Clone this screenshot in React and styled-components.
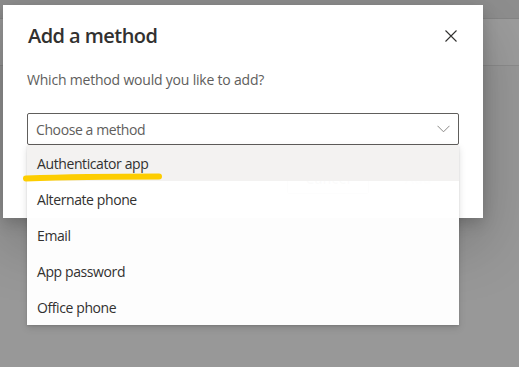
import React from 'react';
import styled, { createGlobalStyle } from 'styled-components';

const GlobalStyle = createGlobalStyle`
  body {
    margin: 0;
    background: #999999;
    font-family: "Segoe UI", "Open Sans", "Noto Sans", sans-serif;
  }
`;

const Page = styled.div`
  position: relative;
  width: 519px;
  height: 367px;
  overflow: hidden;
  padding: 5px 0 0 3px;
  box-sizing: border-box;
  background: linear-gradient(
    to bottom,
    #8e8e8e 0 18px,
    #858585 18px 19px,
    #9c9c9c 19px 65px,
    #8c8c8c 65px 66px,
    #989898 66px
  );
`;

const Dialog = styled.div`
  position: relative;
  width: 480px;
  height: 213px;
  box-sizing: border-box;
  padding: 0 24px 24px;
  background: #ffffff;
  display: flex;
  flex-direction: column;
  box-shadow: 0 25.6px 57.6px rgba(0, 0, 0, 0.22),
    0 4.8px 14.4px rgba(0, 0, 0, 0.18);
`;

const Header = styled.div`
  display: flex;
  align-items: center;
  justify-content: space-between;
  padding-top: 17px;
`;

const Title = styled.h2`
  margin: 0 0 0 1px;
  font-size: 20px;
  line-height: 28px;
  font-weight: 600;
  letter-spacing: -0.55px;
  color: #323130;
`;

const CloseButton = styled.button`
  width: 12px;
  height: 28px;
  margin-right: 2px;
  padding: 0;
  border: none;
  background: none;
  display: flex;
  align-items: center;
  justify-content: center;
`;

const Subtitle = styled.p`
  margin: 20px 0 0 0;
  font-size: 14px;
  line-height: 20px;
  letter-spacing: -0.2px;
  color: #605e5c;
`;

const Field = styled.div`
  position: relative;
  margin-top: 23px;
  z-index: 2;
`;

const Select = styled.div`
  height: 32px;
  box-sizing: border-box;
  border: 1px solid #605e5c;
  border-radius: 2px;
  padding: 0 8px;
  display: flex;
  align-items: center;
  justify-content: space-between;
  font-size: 14px;
  letter-spacing: -0.4px;
  color: #605e5c;
`;

const Menu = styled.ul`
  position: absolute;
  top: 100%;
  left: 0;
  width: 100%;
  margin: 0;
  padding: 0;
  list-style: none;
  background: rgba(255, 255, 255, 0.985);
  box-shadow: 0 3.2px 7.2px rgba(0, 0, 0, 0.132),
    0 0.6px 1.8px rgba(0, 0, 0, 0.108);
`;

const Option = styled.li`
  height: 36px;
  padding: 0 10px;
  display: flex;
  align-items: center;
  font-size: 14px;
  letter-spacing: -0.4px;
  color: #323130;
  background: ${p => (p.active ? 'rgba(243, 242, 241, 0.985)' : 'transparent')};
`;

const Footer = styled.div`
  margin-top: auto;
  display: flex;
  justify-content: flex-end;
  gap: 8px;
`;

const Button = styled.button`
  width: 82px;
  height: 32px;
  box-sizing: border-box;
  border-radius: 2px;
  font-family: inherit;
  font-size: 14px;
  font-weight: 600;
  border: 1px solid ${p => (p.disabled ? '#f3f2f1' : '#8a8886')};
  background: ${p => (p.disabled ? '#f3f2f1' : '#ffffff')};
  color: ${p => (p.disabled ? '#a19f9d' : '#323130')};
`;

const Marker = styled.svg`
  position: absolute;
  left: 18px;
  top: 169px;
  z-index: 5;
`;

const methods = [
  'Authenticator app',
  'Alternate phone',
  'Email',
  'App password',
  'Office phone',
];

export default function App() {
  return (
    <Page>
      <GlobalStyle />
      <Dialog>
        <Header>
          <Title>Add a method</Title>
          <CloseButton aria-label="Close">
            <svg width="12" height="12" viewBox="0 0 12 12">
              <path
                d="M0.5 0.5 L11.5 11.5 M11.5 0.5 L0.5 11.5"
                stroke="#323130"
                strokeWidth="1.1"
                fill="none"
              />
            </svg>
          </CloseButton>
        </Header>
        <Subtitle>Which method would you like to add?</Subtitle>
        <Field>
          <Select>
            <span>Choose a method</span>
            <svg width="13" height="8" viewBox="0 0 13 8">
              <path
                d="M0.5 0.8 L6.5 6.8 L12.5 0.8"
                stroke="#8a8886"
                strokeWidth="1"
                fill="none"
              />
            </svg>
          </Select>
          <Menu>
            {methods.map((m, i) => (
              <Option key={m} active={i === 0}>
                {m}
              </Option>
            ))}
          </Menu>
        </Field>
        <Footer>
          <Button>Cancel</Button>
          <Button disabled>Add</Button>
        </Footer>
      </Dialog>
      <Marker width="150" height="16" viewBox="0 0 150 16">
        <path
          d="M8 9.5 C 50 8, 100 7.5, 141 7.5"
          stroke="#fdcd00"
          strokeWidth="6"
          strokeLinecap="round"
          fill="none"
        />
      </Marker>
    </Page>
  );
}
